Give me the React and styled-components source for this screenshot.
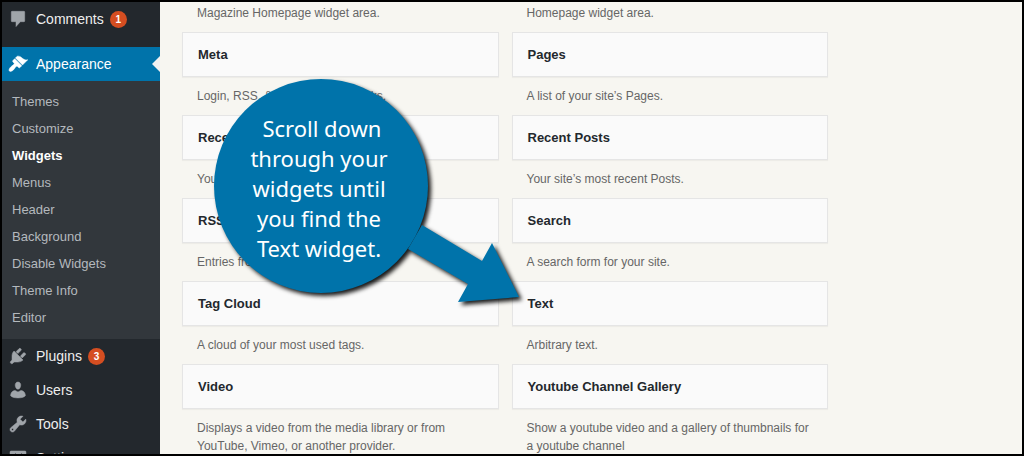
import React from 'react';

import styled, { createGlobalStyle, css } from 'styled-components';

const ICONS = {
  comments:
    'M4 2.3h12q.7 0 .7.7v9q0 .7-.7.7h-3.6L8 17.6v-4.9H4q-.7 0-.7-.7V3q0-.7.7-.7z',
  appearance:
    'M14.48 11.06L7.41 3.99l1.5-1.5c.5-.56 2.3-.47 3.51.32 1.21.8 1.43 1.28 2.91 2.1 1.18.64 2.45 1.26 4.45.85zm-.71.71L6.7 4.7 4.93 6.47c-.39.39-.39 1.02 0 1.41l1.06 1.06c.39.39.39 1.03 0 1.42-.6.6-1.43 1.11-2.21 1.69-.35.26-.7.53-1.01.84C1.43 14.23.4 16.08 1.4 17.07c.99 1 2.84-.03 4.18-1.36.31-.31.58-.66.85-1.02.57-.78 1.08-1.61 1.69-2.21.39-.39 1.02-.39 1.41 0l1.06 1.06c.39.39 1.02.39 1.41 0z',
  plugins:
    'M13.11 4.36L9.87 7.6 8 5.73l3.24-3.24c.35-.34 1.05-.2 1.56.32.52.51.66 1.21.31 1.55zm-8 1.77l.91-1.12 9.01 9.01-1.19.84c-.71.71-2.63 1.16-3.82 1.16H6.14L4.9 17.26c-.59.59-1.54.59-2.12 0-.59-.58-.59-1.53 0-2.12l1.24-1.24v-3.88c0-1.13.4-3.19 1.09-3.89zm7.26 3.97l3.24-3.24c.34-.35 1.04-.21 1.55.31.52.51.66 1.21.31 1.55l-3.24 3.25z',
  users:
    'M10 9.25c-2.27 0-2.73-3.44-2.73-3.44C7 4.02 7.82 2 9.97 2c2.16 0 2.98 2.02 2.71 3.81 0 0-.41 3.44-2.68 3.44zM7 10.4L10 12l3-1.6c2.9.3 4.4 2.6 4.4 5.3-1.2 1.7-4.4 2.2-7.4 2.2s-6.2-.5-7.4-2.2c0-2.7 1.5-5 4.4-5.3z',
  tools:
    'M16.68 9.77c-1.34 1.34-3.3 1.67-4.95.99l-5.41 6.52c-.99.99-2.59.99-3.58 0s-.99-2.59 0-3.57l6.52-5.42c-.68-1.65-.35-3.61.99-4.95 1.28-1.28 3.12-1.62 4.72-1.06l-2.89 2.89 2.82 2.82 2.86-2.87c.53 1.58.18 3.39-1.08 4.65zM3.81 16.21c.4.39 1.04.39 1.43 0 .4-.4.4-1.04 0-1.43-.39-.4-1.03-.4-1.43 0-.39.39-.39 1.03 0 1.43z',
  settings:
    'M18 16V4c0-.55-.45-1-1-1H3c-.55 0-1 .45-1 1v12c0 .55.45 1 1 1h14c.55 0 1-.45 1-1zM8 11h1c.55 0 1 .45 1 1s-.45 1-1 1H8v1.5c0 .28-.22.5-.5.5s-.5-.22-.5-.5V13H6c-.55 0-1-.45-1-1s.45-1 1-1h1V5.5c0-.28.22-.5.5-.5s.5.22.5.5V11zm5-2h-1c-.55 0-1-.45-1-1s.45-1 1-1h1V5.5c0-.28.22-.5.5-.5s.5.22.5.5V7h1c.55 0 1 .45 1 1s-.45 1-1 1h-1v5.5c0 .28-.22.5-.5.5s-.5-.22-.5-.5V9z',
};

const APPEARANCE_LINKS = [
  'Themes',
  'Customize',
  'Widgets',
  'Menus',
  'Header',
  'Background',
  'Disable Widgets',
  'Theme Info',
  'Editor',
];

const WIDGETS = [
  { title: 'Meta', text: 'Login, RSS, & WordPress.org links.' },
  { title: 'Pages', text: 'A list of your site’s Pages.' },
  { title: 'Recent Comments', text: 'Your site’s most recent comments.' },
  { title: 'Recent Posts', text: 'Your site’s most recent Posts.' },
  { title: 'RSS', text: 'Entries from any RSS or Atom feed.' },
  { title: 'Search', text: 'A search form for your site.' },
  { title: 'Tag Cloud', text: 'A cloud of your most used tags.' },
  { title: 'Text', text: 'Arbitrary text.' },
  {
    title: 'Video',
    text: 'Displays a video from the media library or from YouTube, Vimeo, or another provider.',
  },
  {
    title: 'Youtube Channel Gallery',
    text: 'Show a youtube video and a gallery of thumbnails for a youtube channel',
  },
];

function MenuItem({ icon, label, count, current }) {
  return (
    <MenuLink href="#" $current={current}>
      <MenuIcon viewBox="0 0 20 20" $current={current} aria-hidden="true">
        <path d={ICONS[icon]} />
      </MenuIcon>
      {label}
      {count && <Badge>{count}</Badge>}
    </MenuLink>
  );
}

function Callout() {
  return (
    <CalloutWrapper>
      <CalloutShape viewBox="0 0 310 230" aria-hidden="true">
        <circle cx="109" cy="110" r="107" />
        <path d="M210 149L270 185L280 167L307 221L246 226L256 208L196 173Z" />
      </CalloutShape>
      <CalloutText>
        {' Scroll down\nthrough your\nwidgets until\nyou find the\nText widget.'}
      </CalloutText>
    </CalloutWrapper>
  );
}

export default function App() {
  return (
    <Frame>
      <GlobalStyle />
      <Sidebar>
        <MenuItem icon="comments" label="Comments" count={1} />
        <Separator />
        <MenuItem icon="appearance" label="Appearance" current />
        <Submenu>
          {APPEARANCE_LINKS.map((label) => (
            <li key={label}>
              <SubmenuLink href="#" $current={label === 'Widgets'}>
                {label}
              </SubmenuLink>
            </li>
          ))}
        </Submenu>
        <MenuItem icon="plugins" label="Plugins" count={3} />
        <MenuItem icon="users" label="Users" />
        <MenuItem icon="tools" label="Tools" />
        <MenuItem icon="settings" label="Settings" />
      </Sidebar>
      <Main>
        <WidgetGrid>
          <Description>Magazine Homepage widget area.</Description>
          <Description>Homepage widget area.</Description>
          {WIDGETS.map(({ title, text }) => (
            <div key={title}>
              <WidgetTitle>{title}</WidgetTitle>
              <Description>{text}</Description>
            </div>
          ))}
        </WidgetGrid>
        <Callout />
      </Main>
    </Frame>
  );
}

const GlobalStyle = createGlobalStyle`
  * {
    box-sizing: border-box;
  }

  body {
    margin: 0;
    font-family: "Liberation Sans", Arial, sans-serif;
  }
`;

const Frame = styled.div`
  display: flex;
  height: 100vh;
  overflow: hidden;
  border: 2px solid #000;
  background-color: #f7f6f1;
`;

const Sidebar = styled.nav`
  flex: 0 0 158px;
  background-color: #23282d;
`;

const MenuLink = styled.a`
  position: relative;
  display: flex;
  align-items: center;
  height: 34px;
  padding-left: 6px;
  color: #eee;
  font-size: 14px;
  line-height: 18px;
  text-decoration: none;

  ${({ $current }) =>
    $current &&
    css`
      background-color: #0073aa;
      color: #fff;

      &::after {
        content: '';
        position: absolute;
        top: 9px;
        right: 0;
        border: 8px solid transparent;
        border-left-width: 0;
        border-right-color: #f1f1f1;
      }
    `}
`;

const MenuIcon = styled.svg`
  width: 20px;
  height: 20px;
  margin-right: 8px;
  color: ${({ $current }) => ($current ? '#fff' : '#a0a5aa')};
  fill: currentColor;
  stroke: currentColor;
  stroke-width: 0.5;
`;

const Badge = styled.span`
  width: 17px;
  height: 17px;
  margin-left: 6px;
  border-radius: 50%;
  background-color: #d54e21;
  color: #fff;
  font-size: 10px;
  font-weight: 700;
  line-height: 17px;
  text-align: center;
`;

const Separator = styled.div`
  height: 11px;
`;

const Submenu = styled.ul`
  margin: 0;
  padding: 7px 0 8px;
  list-style: none;
  background-color: #32373c;
`;

const SubmenuLink = styled.a`
  display: block;
  padding-left: 10px;
  color: ${({ $current }) => ($current ? '#fff' : '#b4b9be')};
  font-size: 13px;
  font-weight: ${({ $current }) => ($current ? 700 : 400)};
  line-height: 27px;
  text-decoration: none;
`;

const Main = styled.main`
  position: relative;
  flex: 1;
  min-width: 0;
  padding: 2px 194px 0 22px;
`;

const WidgetGrid = styled.div`
  display: grid;
  grid-template-columns: 1fr 1fr;
  gap: 10px 13px;
`;

const WidgetTitle = styled.h3`
  margin: 0 0 10px;
  padding: 0 15px;
  border: 1px solid #e5e5e5;
  background-color: #fafafa;
  box-shadow: 0 1px 1px rgba(0, 0, 0, 0.04);
  color: #23282d;
  font-size: 13px;
  line-height: 43px;
`;

const Description = styled.p`
  margin: 0;
  padding: 0 15px;
  color: #666;
  font-size: 12px;
  line-height: 18px;
`;

const CalloutWrapper = styled.div`
  position: absolute;
  top: 74px;
  left: 52px;
  width: 310px;
`;

const CalloutShape = styled.svg`
  display: block;
  width: 310px;
  height: 230px;
  overflow: visible;
  fill: #0073aa;
  filter: drop-shadow(3px 3px 2px rgba(0, 0, 0, 0.9));
`;

const CalloutText = styled.p`
  position: absolute;
  top: 37px;
  left: 0;
  width: 214px;
  margin: 0;
  color: #fff;
  font-family: "Noto Sans", "Open Sans", sans-serif;
  font-size: 22px;
  line-height: 30px;
  text-align: center;
  white-space: pre;
`;
